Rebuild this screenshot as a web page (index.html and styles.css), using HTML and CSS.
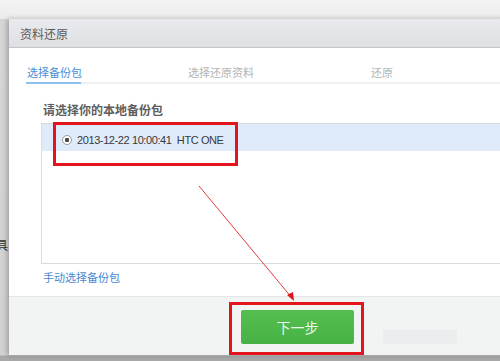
FILE: index.html
```html
<!DOCTYPE html>
<html lang="zh-CN">
<head>
  <meta charset="UTF-8" />
  <meta name="viewport" content="width=device-width, initial-scale=1.0"/>
  <title>资料还原</title>
  <link rel="stylesheet" href="styles.css">
</head>
<body>
  <div class="screen">
    <span class="behind">具</span>

    <div class="dialog">
      <div class="titlebar">资料还原</div>

      <div class="content">
        <div class="tabs">
          <div class="tab active">选择备份包</div>
          <div class="tab">选择还原资料</div>
          <div class="tab">还原</div>
        </div>

        <div class="section">
          <div class="section-title">请选择你的本地备份包</div>
          <div class="list">
            <div class="row selected">
              <span class="radio"></span>
              <span class="row-text">2013-12-22 10:00:41&nbsp;&nbsp;HTC ONE</span>
            </div>
          </div>
          <a class="manual" href="#">手动选择备份包</a>
        </div>
      </div>

      <div class="footer">
        <button class="btn-next">下一步</button>
        <span class="btn-ghost"></span>
      </div>
    </div>

    <!-- annotations drawn over the screenshot -->
    <div class="mark mark-row"></div>
    <div class="mark mark-btn"></div>
    <svg class="arrow" width="500" height="361" viewBox="0 0 500 361">
      <line x1="199" y1="186" x2="292" y2="298" stroke="#e23a3a" stroke-width="1"/>
      <polygon points="294,301 287,295 293,292" fill="#e0141b"/>
    </svg>
  </div>
</body>
</html>
```

FILE: styles.css
```css
html, body {
  margin: 0;
  height: 100%;
}

body {
  font-family: "Liberation Sans", "Noto Sans CJK SC", sans-serif;
  background: #b9b9b9;
  overflow: hidden;
}

.screen {
  position: relative;
  width: 500px;
  height: 361px;
  padding: 19px 0 0 9px;
  box-sizing: border-box;
  overflow: hidden;
  background: linear-gradient(to bottom, #f3f3f3 0, #ececec 19px, #d6d6d6 19px, #d2d2d2 355px, #a9a9a9 356px);
}

.behind {
  position: absolute;
  left: -4px;
  top: 236px;
  font-size: 12px;
  color: #333;
  font-family: "Noto Sans CJK SC", sans-serif;
}

.dialog {
  position: relative;
  width: 540px;
  height: 336px;
  background: #fff;
  box-shadow: -2px 0 5px rgba(0, 0, 0, 0.25);
  display: flex;
  flex-direction: column;
}

.titlebar {
  height: 28px;
  line-height: 29px;
  padding-left: 11px;
  font-size: 12px;
  color: #595959;
  background: linear-gradient(to bottom, #e9eaed, #dfe0e4);
  border-bottom: 1px solid #c4c5c8;
  font-family: "Noto Sans CJK SC", sans-serif;
}

.content {
  flex: 1;
  padding: 16px 0 0 17px;
}

.tabs {
  display: grid;
  grid-template-columns: 161px 183px auto;
  border-bottom: 2px solid #eef0f1;
  font-size: 11px;
  font-family: "Noto Sans CJK SC", sans-serif;
  white-space: nowrap;
}

.tab {
  line-height: 16px;
  padding: 0 0 2px 1px;
  color: #b4b4b4;
}

.tab.active {
  color: #4a8fd8;
  width: 54px;
  border-bottom: 2px solid #8dc0ee;
  margin-bottom: -2px;
}

.section {
  padding: 18px 0 0 15px;
}

.section-title {
  font-size: 12px;
  line-height: 16px;
  font-weight: bold;
  color: #5e5e5e;
  padding-left: 2px;
  margin-bottom: 5px;
  font-family: "Noto Sans CJK SC", sans-serif;
}

.list {
  width: 470px;
  height: 139px;
  border: 1px solid #d9dbdd;
  border-right: none;
}

.row {
  height: 27px;
  display: flex;
  align-items: center;
  padding-left: 20px;
}

.row.selected {
  background: #dfeafa;
}

.radio {
  width: 8px;
  height: 8px;
  border: 1px solid #9a9a9a;
  border-radius: 50%;
  background: #fff radial-gradient(circle, #4a4a4a 0 2px, transparent 2.5px);
  margin-right: 5px;
  margin-top: 4px;
}

.row-text {
  font-size: 11px;
  letter-spacing: -0.4px;
  color: #3a3a3a;
  margin-top: 4px;
}

.manual {
  display: block;
  margin-top: 5px;
  padding-left: 2px;
  font-size: 11px;
  line-height: 16px;
  color: #4a8ad4;
  text-decoration: none;
  font-family: "Noto Sans CJK SC", sans-serif;
}

.footer {
  height: 58px;
  border-top: 1px solid #e4e6e7;
  background: #f2f4f4;
  display: flex;
  align-items: flex-start;
  padding-left: 232px;
  gap: 29px;
}

.btn-next {
  margin-top: 13px;
  width: 113px;
  height: 34px;
  border: none;
  border-radius: 2px;
  background: linear-gradient(to bottom, #55be50, #47b244);
  color: #eef8ee;
  font-size: 14px;
  font-family: "Noto Sans CJK SC", sans-serif;
}

.btn-ghost {
  margin-top: 33px;
  width: 74px;
  height: 14px;
  background: #ebedee;
}

.mark {
  position: absolute;
  border: 3px solid #e3141c;
  box-sizing: border-box;
}

.mark-row {
  left: 53px;
  top: 122px;
  width: 185px;
  height: 44px;
}

.mark-btn {
  left: 229px;
  top: 302px;
  width: 135px;
  height: 53px;
}

.arrow {
  position: absolute;
  left: 0;
  top: 0;
}
```
